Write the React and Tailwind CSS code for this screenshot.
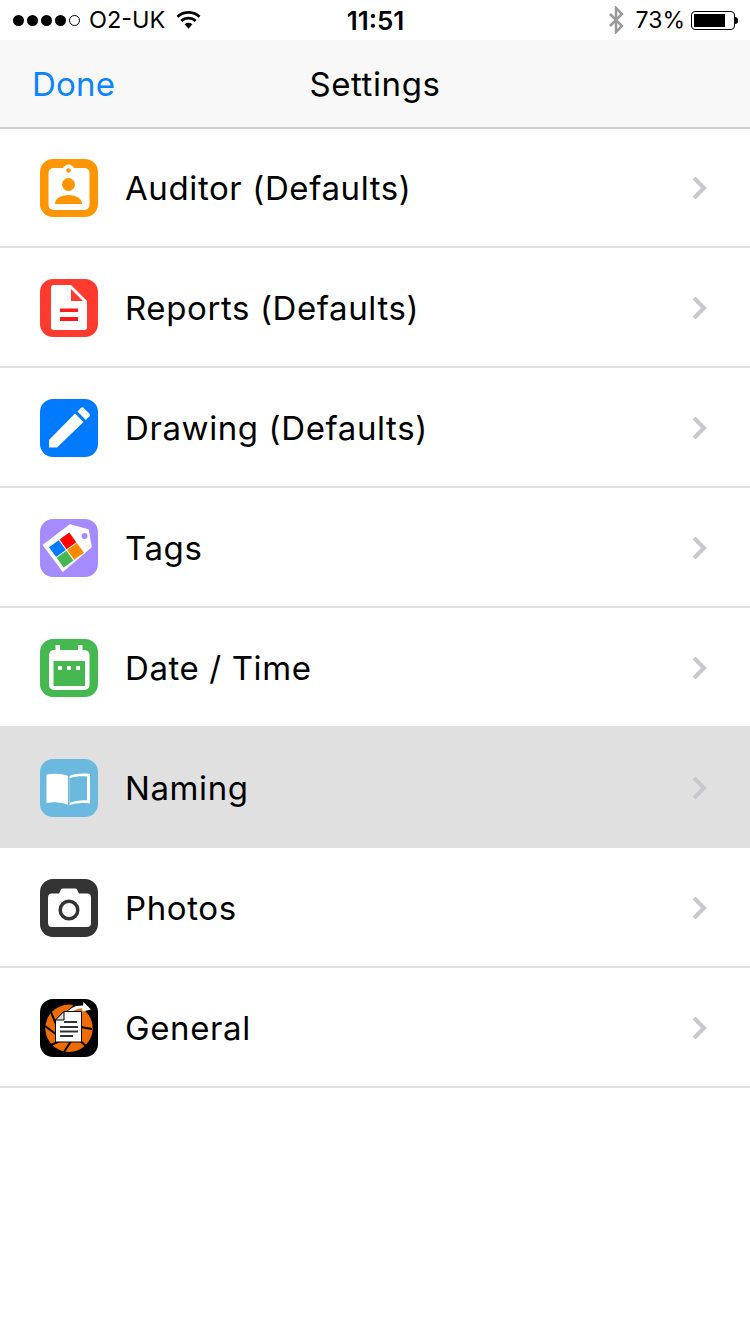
import React from "react";

const font = "font-['Inter','Liberation_Sans',sans-serif]";

function AuditorIcon() {
  return (
    <svg viewBox="0 0 58 58" className="w-[58px] h-[58px]">
      <rect width="58" height="58" rx="13" fill="#ff9500" />
      <rect x="8.5" y="9" width="41" height="42" rx="5" fill="#fff" />
      <circle cx="28.5" cy="11.5" r="6" fill="#fff" />
      <circle cx="28.5" cy="11.5" r="2.2" fill="#ff9500" />
      <circle cx="28.5" cy="25.5" r="6.5" fill="#ff9500" />
      <path d="M15 45c0-5.5 6-9 13.5-9S42 39.500 42 45z" fill="#ff9500" />
    </svg>
  );
}

function ReportsIcon() {
  return (
    <svg viewBox="0 0 58 58" className="w-[58px] h-[58px]">
      <rect width="58" height="58" rx="13" fill="#ff3b30" />
      <path d="M14 6h17l16 16v26a3 3 0 0 1-3 3H14a3 3 0 0 1-3-3V9a3 3 0 0 1 3-3z" fill="#fff" />
      <path d="M31 10l12 12H31z" fill="#ff3b30" />
      <rect x="20" y="29.500" width="18" height="3.500" fill="#ff1a1a" />
      <rect x="20" y="38" width="18" height="4" fill="#ff1a1a" />
    </svg>
  );
}

function DrawingIcon() {
  return (
    <svg viewBox="0 0 58 58" className="w-[58px] h-[58px]">
      <rect width="58" height="58" rx="13" fill="#007aff" />
      <path d="M9 41L35 14.500l8.500 8.500L17 48.500H9z" fill="#fff" />
      <path d="M37.500 12.500l3.500-3.700a2 2 0 0 1 2.500 0l6 6a2 2 0 0 1 0 2.500l-3.700 3.700z" fill="#fff" />
    </svg>
  );
}

function TagsIcon() {
  return (
    <svg viewBox="0 0 58 58" className="w-[58px] h-[58px]">
      <rect width="58" height="58" rx="13" fill="#a48bff" />
      <path d="M3.500 26L30 6l18 5 3 17-28 24z" fill="#fff" stroke="#fff" strokeWidth="1.500" strokeLinejoin="round" />
      <circle cx="44.500" cy="17" r="3" fill="#a48bff" />
      <g transform="rotate(-36 26.500 31)">
        <rect x="14" y="18.500" width="12" height="12" fill="#007aff" />
        <rect x="27" y="18.500" width="12" height="12" fill="#ff0000" />
        <rect x="14" y="31.500" width="12" height="12" fill="#45b84f" />
        <rect x="27" y="31.500" width="12" height="12" fill="#ff8a00" />
      </g>
    </svg>
  );
}

function DateIcon() {
  return (
    <svg viewBox="0 0 58 58" className="w-[58px] h-[58px]">
      <rect width="58" height="58" rx="13" fill="#45b84f" />
      <rect x="9" y="11" width="40.500" height="40" rx="5" fill="#fff" />
      <rect x="15.500" y="6" width="4.500" height="6" fill="#fff" />
      <rect x="38" y="6" width="4.500" height="6" fill="#fff" />
      <rect x="13.500" y="22" width="31.500" height="25" fill="#45b84f" />
      <rect x="18" y="27" width="4" height="4" fill="#fff" />
      <rect x="27" y="27" width="4" height="4" fill="#fff" />
      <rect x="36" y="27" width="4" height="4" fill="#fff" />
    </svg>
  );
}

function NamingIcon() {
  return (
    <svg viewBox="0 0 58 58" className="w-[58px] h-[58px]">
      <rect width="58" height="58" rx="13" fill="#6cb9e0" />
      <path d="M6.500 15.500c8-1.500 16-1 21.500 1.500V46c-6-3-14-3.500-21.500-2z" fill="#fff" />
      <path d="M29.500 17C35 14.500 43 14 50 15V44.500c-8-1-15-.5-20.500 2z" fill="#fff" />
      <path d="M29.500 19.200C35 17.500 41 17 47 17.500v24c-6-.5-12 .500-17.500 2.500z" fill="#6cb9e0" />
    </svg>
  );
}

function PhotosIcon() {
  return (
    <svg viewBox="0 0 58 58" className="w-[58px] h-[58px]">
      <rect width="58" height="58" rx="13" fill="#333333" />
      <path d="M12 14.500h7l2-4a2 2 0 0 1 1.700-1h12.600a2 2 0 0 1 1.700 1l2 4h8a4 4 0 0 1 4 4V44a4 4 0 0 1-4 4H12a4 4 0 0 1-4-4V18.500a4 4 0 0 1 4-4z" fill="#fff" />
      <circle cx="29" cy="31" r="8.800" fill="none" stroke="#333333" strokeWidth="3.500" />
    </svg>
  );
}

function GeneralIcon() {
  return (
    <svg viewBox="0 0 58 58" className="w-[58px] h-[58px]">
      <rect width="58" height="58" rx="13" fill="#000" />
      <circle cx="29" cy="29.300" r="23.700" fill="#f06c00" />
      <g stroke="#000" strokeWidth="2" fill="none">
        <path d="M5 27l12 9" />
        <path d="M11 13l6 15" />
        <path d="M11 46l13-6" />
        <path d="M24 53l9-14" />
        <path d="M46 47l-9-8" />
        <path d="M52 30l-12-2" />
        <path d="M35 6L19 21" />
      </g>
      <path d="M26 14c4-5 10-8 17-7.500L43.500 3 51 10.500l-8.500 2-.5-3c-5 0-9 2-12 5.500z" fill="#fff" />
      <path d="M24 12.500h17.500V43H15.500V21z" fill="#fff" stroke="#000" strokeWidth="1" />
      <path d="M24 12.500V21h-8.500z" fill="#ddd" stroke="#000" strokeWidth="1" />
      <rect x="24" y="22" width="13" height="2" fill="#333" />
      <rect x="20" y="27" width="18" height="2" fill="#333" />
      <rect x="20" y="31.500" width="18" height="2" fill="#333" />
      <rect x="20" y="36" width="13" height="2" fill="#333" />
    </svg>
  );
}

const rows = [
  { label: "Auditor (Defaults)", icon: <AuditorIcon /> },
  { label: "Reports (Defaults)", icon: <ReportsIcon /> },
  { label: "Drawing (Defaults)", icon: <DrawingIcon /> },
  { label: "Tags", icon: <TagsIcon /> },
  { label: "Date / Time", icon: <DateIcon /> },
  { label: "Naming", icon: <NamingIcon />, active: true },
  { label: "Photos", icon: <PhotosIcon /> },
  { label: "General", icon: <GeneralIcon /> },
];

function Row({ label, icon, active }) {
  return (
    <div
      className={
        "flex items-center h-[120px] pt-0.5 first:h-[119px] first:pt-0 pl-10 pr-[42px] border-b-2 border-[#e0e0e0] " +
        (active ? "bg-[#e0e0e0]" : "bg-white")
      }
    >
      {icon}
      <span className="ml-[27px] pt-0.5 flex-1 text-[33px] tracking-[0.6px] text-black">{label}</span>
      <svg viewBox="0 0 16 24" className="w-4 h-6">
        <path d="M2 2l10 10L2 22" fill="none" stroke="#c7c7cc" strokeWidth="4" />
      </svg>
    </div>
  );
}

export default function App() {
  return (
    <div className={"w-[750px] min-h-[1334px] bg-white " + font}>
      {/* status bar */}
      <div className="flex items-center justify-between h-10 pl-[13px] pr-3 text-black">
        <div className="flex items-center w-[300px]">
          <div className="flex gap-[3px]">
            <span className="w-[11px] h-[11px] rounded-full bg-black" />
            <span className="w-[11px] h-[11px] rounded-full bg-black" />
            <span className="w-[11px] h-[11px] rounded-full bg-black" />
            <span className="w-[11px] h-[11px] rounded-full bg-black" />
            <span className="w-[11px] h-[11px] rounded-full border border-black" />
          </div>
          <span className="ml-[9px] text-[23.5px]">O2-UK</span>
          <svg viewBox="0 0 26 18" className="ml-[11px] w-[25px] h-[18px]">
            <path d="M13 18l-4-4.500a6 6 0 0 1 8 0z" fill="#000" />
            <path d="M5.500 10a11 11 0 0 1 15 0M1.500 5.500a17 17 0 0 1 23 0" fill="none" stroke="#000" strokeWidth="2.800" />
          </svg>
        </div>
        <span className="text-[26px] font-semibold">11:51</span>
        <div className="flex items-center justify-end w-[300px]">
          <svg viewBox="0 0 16 28" className="w-4 h-7">
            <path d="M2 8l12 12-6 6V2l6 6L2 20" fill="none" stroke="#9b9b9b" strokeWidth="2.500" />
          </svg>
          <span className="ml-3 text-[23px]">73%</span>
          <div className="ml-1.5 w-[44px] h-[19px] border border-black rounded-[4px] p-0.5">
            <div className="w-[31px] h-full bg-black" />
          </div>
          <span className="w-[3px] h-[7px] bg-black rounded-r-sm" />
        </div>
      </div>
      {/* nav bar */}
      <div className="relative flex items-center justify-center h-[89px] pt-0.5 bg-[#f8f8f8] border-b-2 border-[#cfcfcf] text-[33px] tracking-[0.6px]">
        <span className="absolute left-8 tracking-[0.2px] text-[#0a84ff]">Done</span>
        <span className="text-black">Settings</span>
      </div>
      <div>
        {rows.map((row) => (
          <Row key={row.label} {...row} />
        ))}
      </div>
    </div>
  );
}
